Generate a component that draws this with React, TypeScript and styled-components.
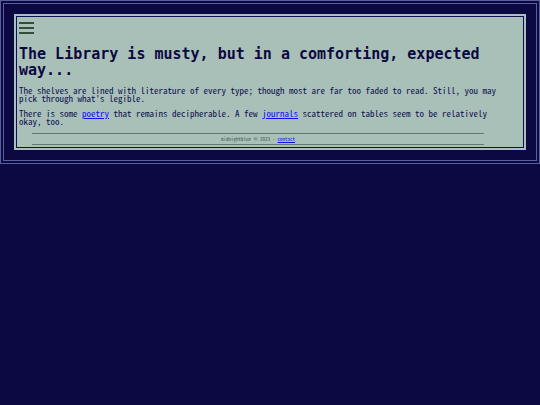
import React, { FC } from 'react';
import styled, { createGlobalStyle } from 'styled-components';

const GlobalStyle = createGlobalStyle`
  * {
    box-sizing: border-box;
  }
  body {
    margin: 0;
    background: #0c0841;
    color: #0f1050;
    font-family: 'Noto Sans Mono CJK JP', 'DejaVu Sans Mono', monospace;
    font-size: 9px;
    line-height: 8px;
  }
`;

const Frame = styled.div`
  padding: 10px;
  border: 4px double #5a5e9c;
`;

const Panel = styled.main`
  padding: 4px 1px 1px 2px;
  background: #a9c0b8;
  border: 2px solid #a9bfc0;
  outline: 1px solid #0f1050;
  outline-offset: -3px;
`;

const MenuButton = styled.button`
  display: flex;
  flex-direction: column;
  gap: 3px;
  width: 16px;
  margin: 0 0 12px 1px;
  padding: 2px 0 0;
  border: 0;
  background: none;
`;

const Bar = styled.span`
  width: 15px;
  height: 2px;
  background: #2f4f38;
`;

const Title = styled.h1`
  margin: 0 0 9px 1px;
  color: #0c0841;
  font-family: 'DejaVu Sans Mono', monospace;
  font-size: 15px;
  line-height: 16px;
`;

const Text = styled.p`
  margin: 0 16px 7px 1px;
`;

const Link = styled.a`
  color: #1010f0;
`;

const Footer = styled.footer`
  margin: 0 39px 2px 14px;
  border: solid #61786f;
  border-width: 1px 0;
  color: #3b5650;
  font-size: 5px;
  line-height: 10px;
  text-align: center;
`;

const Menu: FC = () => (
  <MenuButton type='button' aria-label='Menu'>
    <Bar />
    <Bar />
    <Bar />
  </MenuButton>
);

const App: FC = () => {
  return (
    <>
      <GlobalStyle />
      <Frame>
        <Panel>
          <Menu />
          <Title>The Library is musty, but in a comforting, expected way...</Title>
          <Text>
            The shelves are lined with literature of every type; though most are far too faded to
            read. Still, you may pick through what's legible.
          </Text>
          <Text>
            There is some <Link href='#poetry'>poetry</Link> that remains decipherable. A few{' '}
            <Link href='#journals'>journals</Link> scattered on tables seem to be relatively okay,
            too.
          </Text>
          <Footer>
            midnightblue © 2023 - <Link href='#contact'>contact</Link>
          </Footer>
        </Panel>
      </Frame>
    </>
  );
};

export default App;
